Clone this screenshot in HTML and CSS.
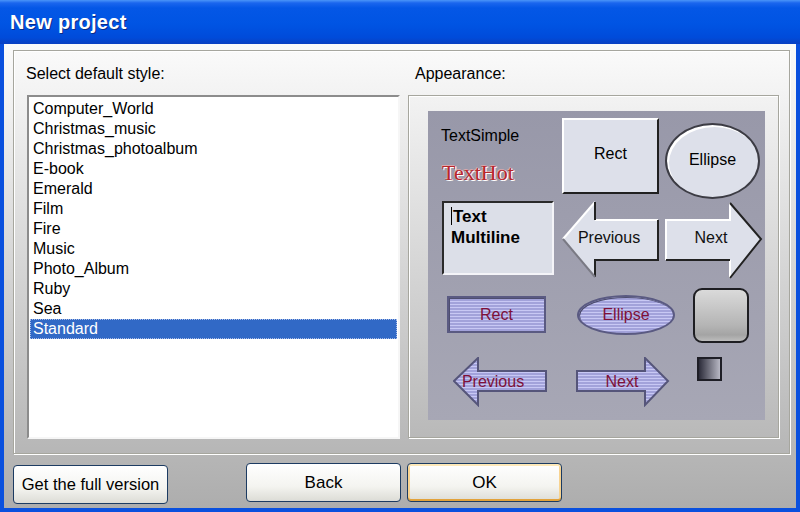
FILE: index.html
```html
<!DOCTYPE html>
<html lang="en">
<head>
    <meta charset="UTF-8">
    <title>New project</title>
    <link rel="stylesheet" href="styles.css">
</head>
<body>
<div class="window">
    <div class="titlebar"><span class="title">New project</span></div>
    <div class="client">
        <div class="group">
            <div class="col col-left">
                <div class="label">Select default style:</div>
                <ul class="listbox">
                    <li>Computer_World</li>
                    <li>Christmas_music</li>
                    <li>Christmas_photoalbum</li>
                    <li>E-book</li>
                    <li>Emerald</li>
                    <li>Film</li>
                    <li>Fire</li>
                    <li>Music</li>
                    <li>Photo_Album</li>
                    <li>Ruby</li>
                    <li>Sea</li>
                    <li class="selected">Standard</li>
                </ul>
            </div>
            <div class="col col-right">
                <div class="label label-right">Appearance:</div>
                <div class="appearance">
                    <!-- preview canvas: each sample sits at its own spot -->
                    <div class="canvas">
                        <div class="text-simple">TextSimple</div>
                        <div class="text-hot">TextHot</div>
                        <div class="rect-light">Rect</div>
                        <div class="ellipse-light">Ellipse</div>
                        <div class="multiline"><span class="caret"></span>Text<br>Multiline</div>

                        <svg class="arrow-prev" width="98" height="78" viewBox="0 0 98 78">
                            <polygon points="1,38 33,1 33,19 96,19 96,59 33,59 33,76" fill="#dde0ea"/>
                            <polyline points="1,38 33,1" fill="none" stroke="#fff" stroke-width="2"/>
                            <polyline points="33,19 96,19" fill="none" stroke="#fff" stroke-width="2"/>
                            <polyline points="33,1 33,19" fill="none" stroke="#222" stroke-width="2"/>
                            <polyline points="96,19 96,59 33,59 33,76" fill="none" stroke="#222" stroke-width="2"/>
                            <polyline points="33,76 1,38" fill="none" stroke="#7a7a84" stroke-width="2"/>
                            <text x="47" y="42" text-anchor="middle" class="svg-text">Previous</text>
                        </svg>

                        <svg class="arrow-next" width="98" height="78" viewBox="0 0 98 78">
                            <polygon points="1,18 65,18 65,1 96,37 65,76 65,58 1,58" fill="#dde0ea"/>
                            <polyline points="1,58 1,18 65,18 65,1" fill="none" stroke="#fff" stroke-width="2"/>
                            <polyline points="65,76 65,58" fill="none" stroke="#fff" stroke-width="2"/>
                            <polyline points="65,1 96,37 65,76" fill="none" stroke="#222" stroke-width="2"/>
                            <polyline points="65,58 1,58" fill="none" stroke="#222" stroke-width="2"/>
                            <text x="46" y="41" text-anchor="middle" class="svg-text">Next</text>
                        </svg>

                        <div class="rect-purple">Rect</div>
                        <div class="ellipse-purple">Ellipse</div>
                        <div class="round-box"></div>
                        <div class="small-box"></div>

                        <svg class="arrow-prev-p" width="95" height="50" viewBox="0 0 95 50">
                            <defs>
                                <pattern id="stripes" width="4" height="3" patternUnits="userSpaceOnUse">
                                    <rect width="4" height="3" fill="#a2a2da"/>
                                    <rect width="4" height="1" fill="#c8c8f4"/>
                                </pattern>
                            </defs>
                            <polygon points="1,24 25,1 25,14 93,14 93,34 25,34 25,48" fill="url(#stripes)" stroke="#55557a" stroke-width="2"/>
                            <text x="40" y="30" text-anchor="middle" class="svg-text-p">Previous</text>
                        </svg>

                        <svg class="arrow-next-p" width="95" height="50" viewBox="0 0 95 50">
                            <polygon points="1,14 69,14 69,1 92,24 69,48 69,34 1,34" fill="url(#stripes)" stroke="#55557a" stroke-width="2"/>
                            <text x="46" y="30" text-anchor="middle" class="svg-text-p">Next</text>
                        </svg>
                    </div>
                </div>
            </div>
        </div>
        <div class="buttons">
            <button class="btn btn-full">Get the full version</button>
            <button class="btn btn-back">Back</button>
            <button class="btn btn-ok">OK</button>
        </div>
    </div>
</div>
</body>
</html>
```

FILE: styles.css
```css
body {
    margin: 0;
    font-family: "Liberation Sans", Arial, sans-serif;
    font-size: 16px;
    color: #000;
}
.window {
    width: 800px;
    height: 512px;
    display: flex;
    flex-direction: column;
}
.titlebar {
    height: 44px;
    flex-shrink: 0;
    display: flex;
    align-items: center;
    padding-left: 10px;
    background: linear-gradient(#4a95f8 0, #1a66ee 3px, #0457e6 8px, #0054e3 55%, #004bda 85%, #0a40c2 100%);
}
.title {
    color: #fff;
    font-weight: bold;
    font-size: 20px;
    letter-spacing: 0.3px;
    text-shadow: 1px 1px 0 #0b2a86;
}
.client {
    flex: 1;
    border: 4px solid #0a50de;
    border-top: none;
    background: linear-gradient(#fbfbfb, #adadad);
    padding: 6px 0 0 9px;
}
.group {
    box-sizing: border-box;
    width: 777px;
    height: 404px;
    border: 1px solid #a6a69e;
    box-shadow: 1px 1px 0 #fff, inset 1px 1px 0 #fff;
    display: flex;
    padding: 13px 0 0 13px;
}
.col-left {
    width: 373px;
}
.col-right {
    width: 371px;
    margin-left: 8px;
}
.label {
    height: 20px;
    line-height: 20px;
    margin: 0 0 11px -1px;
}
.label-right {
    margin-left: 7px;
}
.listbox {
    box-sizing: border-box;
    height: 344px;
    margin: 0;
    padding: 2px 1px;
    list-style: none;
    background: #fff;
    border: 2px solid;
    border-color: #8c8c8c #f6f6f6 #f6f6f6 #8c8c8c;
}
.listbox li {
    height: 20px;
    line-height: 20px;
    padding-left: 3px;
}
.listbox li.selected {
    background: #3169c6;
    color: #fff;
    outline: 1px dotted #a9bce8;
    outline-offset: -1px;
}
.appearance {
    box-sizing: border-box;
    height: 343px;
    border: 1px solid #a6a69e;
    box-shadow: 1px 1px 0 #fff, inset 1px 1px 0 #fff;
    padding: 15px 0 0 19px;
}
.canvas {
    position: relative;
    width: 337px;
    height: 309px;
    background: linear-gradient(#9898a9, #a7a7b5);
}
.canvas > * {
    position: absolute;
    box-sizing: border-box;
}
.text-simple {
    left: 13px;
    top: 16px;
    line-height: 18px;
}
.text-hot {
    left: 14px;
    top: 50px;
    font-family: "Liberation Serif", "Times New Roman", serif;
    font-size: 22px;
    line-height: 24px;
    color: #b8262c;
    text-shadow: 1px 1px 0 #fff, 1px 0 0 #f0e0e0, -1px -1px 0 #d8a8ac;
}
.rect-light {
    left: 134px;
    top: 7px;
    width: 97px;
    height: 76px;
    background: #dde0ea;
    border: 2px solid;
    border-color: #fff #202020 #202020 #fff;
    display: flex;
    justify-content: center;
    padding-top: 25px;
}
.ellipse-light {
    left: 237px;
    top: 12px;
    width: 95px;
    height: 76px;
    border-radius: 50%;
    background: #dde0ea;
    border: 2px solid #3c3c44;
    box-shadow: inset 2px 2px 0 #fff;
    display: flex;
    justify-content: center;
    align-items: center;
    padding-bottom: 2px;
}
.multiline {
    left: 14px;
    top: 90px;
    width: 112px;
    height: 74px;
    background: #dcdfe8;
    border: 2px solid;
    border-color: #2a2a2a #f4f4f8 #f4f4f8 #2a2a2a;
    padding: 3px 0 0 7px;
    font-weight: bold;
    font-size: 17px;
    line-height: 21px;
}
.caret {
    display: inline-block;
    width: 1px;
    height: 18px;
    background: #000;
    vertical-align: -3px;
    margin-right: 1px;
}
.arrow-prev {
    left: 134px;
    top: 90px;
}
.arrow-next {
    left: 237px;
    top: 91px;
}
.svg-text {
    font-family: "Liberation Sans", Arial, sans-serif;
    font-size: 16px;
    fill: #111;
}
.svg-text-p {
    font-family: "Liberation Sans", Arial, sans-serif;
    font-size: 16px;
    fill: #7e1038;
}
.rect-purple,
.ellipse-purple {
    background: repeating-linear-gradient(#c8c8f4 0 1px, #a2a2da 1px 3px);
    border: 2px solid #5a5a82;
    box-shadow: inset 1px 1px 0 #4e4e70;
    color: #7e1038;
    display: flex;
    justify-content: center;
    align-items: center;
}
.rect-purple {
    left: 19px;
    top: 185px;
    width: 99px;
    height: 37px;
}
.ellipse-purple {
    left: 149px;
    top: 184px;
    width: 98px;
    height: 40px;
    border-radius: 50%;
}
.round-box {
    left: 265px;
    top: 177px;
    width: 56px;
    height: 55px;
    border: 2px solid #1e1e22;
    border-radius: 9px;
    background: linear-gradient(#dadada, #b4b4b4 70%, #a4a4a4 88%, #bcbcbc);
}
.small-box {
    left: 269px;
    top: 246px;
    width: 25px;
    height: 24px;
    border: 2px solid #1e1e26;
    background: linear-gradient(to right, #2c2c3a, #b8b8c4);
}
.arrow-prev-p {
    left: 25px;
    top: 246px;
}
.arrow-next-p {
    left: 148px;
    top: 246px;
}
.buttons {
    display: flex;
    align-items: flex-start;
    margin-top: 9px;
}
.btn {
    box-sizing: border-box;
    width: 155px;
    height: 39px;
    font-family: "Liberation Sans", Arial, sans-serif;
    font-size: 17px;
    color: #000;
    border: 1px solid #1c3b62;
    border-radius: 4px;
    background: linear-gradient(#ffffff, #f4f4f0 60%, #dcdcd6);
    padding: 0;
}
.btn-full {
    margin-top: 2px;
    font-size: 16.5px;
}
.btn-back {
    margin-left: 78px;
}
.btn-ok {
    margin-left: 6px;
    box-shadow: inset 0 -2px 0 #e2a23a, inset 0 2px 0 #fde8b8, inset 2px 0 0 #f8d390, inset -2px 0 0 #f8d390;
}
```
